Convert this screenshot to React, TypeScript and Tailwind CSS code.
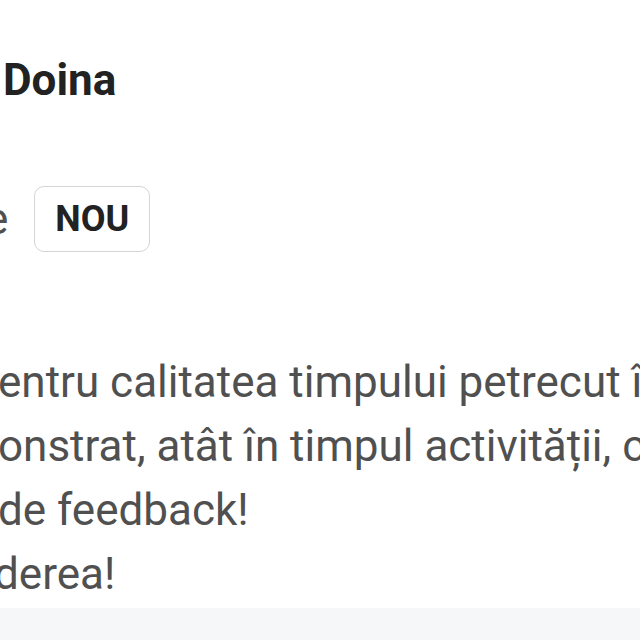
import React from 'react';

// Message card fragment: sender name, "new" badge and the message body
const App: React.FC = () => {
  return (
    <div
      className="flex h-[640px] w-[640px] flex-col overflow-hidden bg-white"
      style={{ fontFamily: 'Roboto, "Noto Sans", "Liberation Sans", sans-serif' }}
    >
      <div className="pl-[3px] pt-[54px] text-[44px] font-bold leading-[52px] text-[#222222]">Doina</div>

      <div className="mt-[80px] flex items-center whitespace-nowrap">
        <span className="-ml-[15px] text-[44px] leading-[66px] text-[#505050]">e</span>
        <span className="ml-[26px] flex h-[66px] w-[116px] items-center justify-center rounded-[10px] border-[1.5px] border-[#d4d4d4] text-[36px] font-bold text-[#222222]">
          NOU
        </span>
      </div>

      <div className="mt-[98px] whitespace-nowrap text-[44px] leading-[64px] text-[#505050]">
        <p className="-ml-[2px]">entru calitatea timpului petrecut împreună</p>
        <p className="-ml-[2px]">onstrat, atât în timpul activității, cât și</p>
        <p className="-ml-[2px]">de feedback!</p>
        <p className="-ml-[6px]">derea!</p>
      </div>

      <div className="mt-[2px] flex-1 bg-[#f6f7f9]" />
    </div>
  );
};

export default App;
